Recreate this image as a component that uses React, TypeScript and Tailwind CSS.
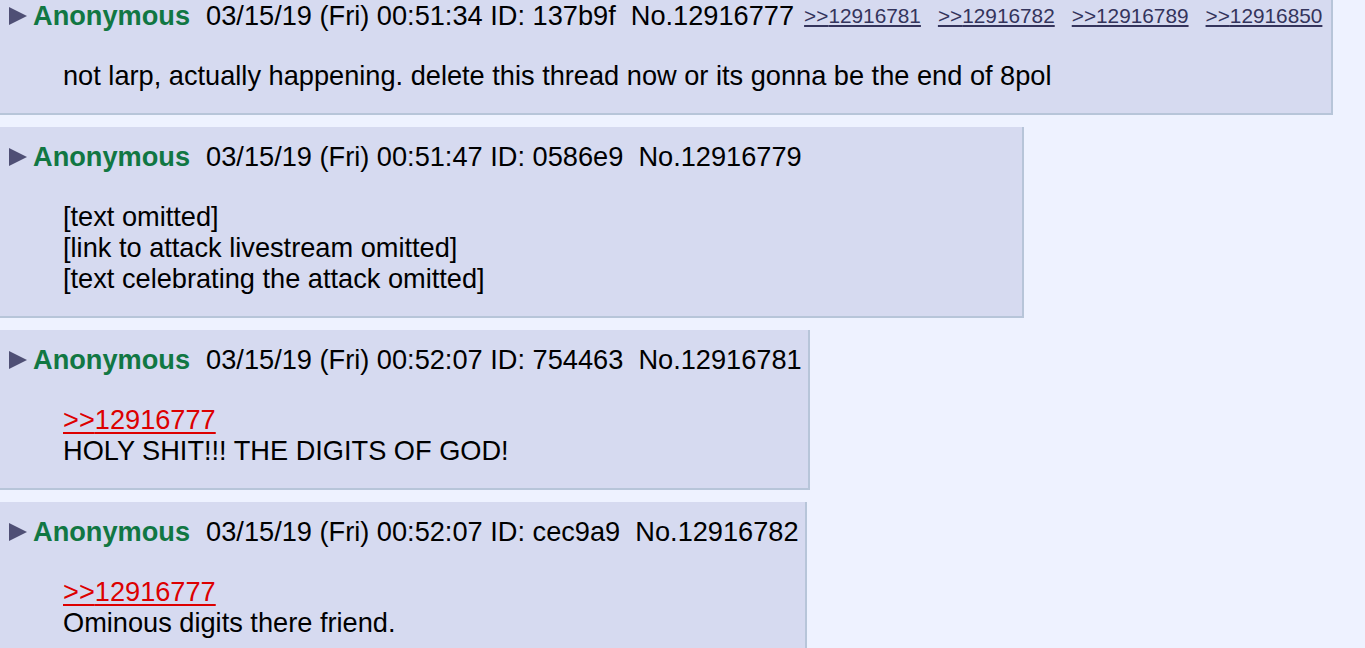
import React from "react";

type Post = {
  date: string;
  id: string;
  no: string;
  backlinks?: string[];
  quote?: string;
  lines: string[];
  bodyClass?: string;
};

const posts: Post[] = [
  {
    date: "03/15/19 (Fri) 00:51:34",
    id: "137b9f",
    no: "12916777",
    backlinks: ["12916781", "12916782", "12916789", "12916850"],
    lines: [
      "not larp, actually happening. delete this thread now or its gonna be the end of 8pol",
    ],
  },
  {
    date: "03/15/19 (Fri) 00:51:47",
    id: "0586e9",
    no: "12916779",
    lines: [
      "[text omitted]",
      "[link to attack livestream omitted]",
      "[text celebrating the attack omitted]",
    ],
    bodyClass: "min-w-[866px]",
  },
  {
    date: "03/15/19 (Fri) 00:52:07",
    id: "754463",
    no: "12916781",
    quote: "12916777",
    lines: ["HOLY SHIT!!! THE DIGITS OF GOD!"],
  },
  {
    date: "03/15/19 (Fri) 00:52:07",
    id: "cec9a9",
    no: "12916782",
    quote: "12916777",
    lines: ["Ominous digits there friend."],
  },
];

function Arrow() {
  return (
    <svg width="18" height="18" viewBox="0 0 18 18" className="ml-[9px] mr-[6px] shrink-0">
      <polygon points="0,0 18,9 0,18" fill="#4f4f75" />
    </svg>
  );
}

function PostBox({ p, first }: { p: Post; first?: boolean }) {
  return (
    <div
      className={`w-fit bg-[#d6daf0] border-r-2 border-b-2 border-[#b7c5d9] pt-[14px] pb-[22px] ${
        first ? "-mt-[14px]" : ""
      }`}
    >
      <div className="flex items-center h-[31px] pr-[6px] whitespace-nowrap">
        <Arrow />
        <span className="font-bold text-[#117743]">Anonymous</span>
        <span className="ml-[16px] text-black">
          {p.date} ID: {p.id}
          {"\u00a0 "}No.{p.no}
        </span>
        {p.backlinks && (
          <span className="flex items-center gap-[17px] ml-[10px] mr-[3px] text-[20.8px] leading-[31px]">
            {p.backlinks.map((b) => (
              <a key={b} className="text-[#34345c] underline underline-offset-[2px]">
                {">>"}
                {b}
              </a>
            ))}
          </span>
        )}
      </div>
      <div className={`mt-[29px] ml-[63px] mr-[93px] text-black ${p.bodyClass ?? ""}`}>
        {p.quote && (
          <div className="h-[31px]">
            <a className="text-[#dd0000] underline underline-offset-[3px]">
              {">>"}
              {p.quote}
            </a>
          </div>
        )}
        {p.lines.map((l, i) => (
          <div key={i} className="h-[31px] whitespace-nowrap">
            {l}
          </div>
        ))}
      </div>
    </div>
  );
}

export default function App() {
  return (
    <div
      className="w-[1365px] h-[648px] overflow-hidden bg-[#eef2ff] text-[27.2px] leading-[31px]"
      style={{ fontFamily: '"Liberation Sans", Arial, sans-serif' }}
    >
      <div className="flex flex-col items-start gap-[12px]">
        {posts.map((p, i) => (
          <PostBox key={p.no} p={p} first={i === 0} />
        ))}
      </div>
    </div>
  );
}
